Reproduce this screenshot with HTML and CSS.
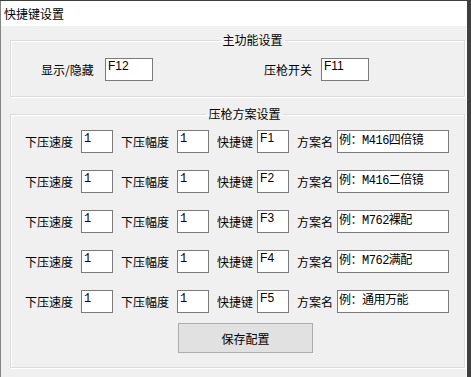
FILE: index.html
```html
<!DOCTYPE html>
<html lang="zh-CN">
<head>
  <meta charset="UTF-8">
  <title>快捷键设置</title>
  <link rel="stylesheet" href="styles.css">
</head>
<body>

<div class="window">
  <div class="titlebar">快捷键设置</div>

  <div class="window-body">
    <fieldset class="group group-main">
      <legend>主功能设置</legend>
      <div class="main-row">
        <label class="lbl-main">显示/隐藏</label>
        <input class="box main-box" value="F12">
        <label class="lbl-main lbl-gun">压枪开关</label>
        <input class="box main-box" value="F11">
      </div>
    </fieldset>

    <fieldset class="group group-scheme">
      <legend>压枪方案设置</legend>

      <div class="scheme-row">
        <label class="lbl">下压速度</label><input class="box num-box" value="1">
        <label class="lbl">下压幅度</label><input class="box num-box" value="1">
        <label class="lbl lbl-short">快捷键</label><input class="box key-box" value="F1">
        <label class="lbl lbl-short">方案名</label><input class="box name-box" value="例：M416四倍镜">
      </div>
      <div class="scheme-row">
        <label class="lbl">下压速度</label><input class="box num-box" value="1">
        <label class="lbl">下压幅度</label><input class="box num-box" value="1">
        <label class="lbl lbl-short">快捷键</label><input class="box key-box" value="F2">
        <label class="lbl lbl-short">方案名</label><input class="box name-box" value="例：M416二倍镜">
      </div>
      <div class="scheme-row">
        <label class="lbl">下压速度</label><input class="box num-box" value="1">
        <label class="lbl">下压幅度</label><input class="box num-box" value="1">
        <label class="lbl lbl-short">快捷键</label><input class="box key-box" value="F3">
        <label class="lbl lbl-short">方案名</label><input class="box name-box" value="例：M762裸配">
      </div>
      <div class="scheme-row">
        <label class="lbl">下压速度</label><input class="box num-box" value="1">
        <label class="lbl">下压幅度</label><input class="box num-box" value="1">
        <label class="lbl lbl-short">快捷键</label><input class="box key-box" value="F4">
        <label class="lbl lbl-short">方案名</label><input class="box name-box" value="例：M762满配">
      </div>
      <div class="scheme-row">
        <label class="lbl">下压速度</label><input class="box num-box" value="1">
        <label class="lbl">下压幅度</label><input class="box num-box" value="1">
        <label class="lbl lbl-short">快捷键</label><input class="box key-box" value="F5">
        <label class="lbl lbl-short">方案名</label><input class="box name-box" value="例：通用万能">
      </div>

      <button class="save-btn">保存配置</button>
    </fieldset>
  </div>
</div>

</body>
</html>
```

FILE: styles.css
```css
* { box-sizing: border-box; }
body {
  margin: 0;
  background: #3f3f3f;
  color: #000;
  font-family: "Noto Sans CJK SC", sans-serif;
  font-size: 12px;
}
.window {
  width: 467px;
  height: 376px;
  margin-top: 1px;
  background: #f0f0f0;
  border-left: 1px solid #858585;
  border-right: 1px solid #fafafa;
  display: flex;
  flex-direction: column;
}
.titlebar {
  height: 25px;
  line-height: 25px;
  padding-left: 3px;
  background: #fff;
}
.window-body {
  flex: 1;
  padding: 6px 1px 0 9px;
}
.group {
  margin: 0;
  min-width: 0;
  border: 1px solid #dcdcdc;
  box-shadow: inset 1px 1px 0 #fff, 1px 1px 0 #fff;
}
.group legend {
  margin: 0 auto;
  padding: 0 2px;
  line-height: 16px;
}
.group-main {
  padding: 10px 0 15px 30px;
}
.group-scheme {
  margin-top: 9px;
  padding: 8px 0 14px 14px;
}
.main-row,
.scheme-row {
  display: flex;
  align-items: center;
  height: 23px;
}
.scheme-row + .scheme-row {
  margin-top: 17px;
}
.lbl-main {
  width: 64px;
}
.lbl-gun {
  width: 57px;
  margin-left: 111px;
}
.lbl {
  margin-right: 8px;
  white-space: nowrap;
}
.lbl-short {
  margin-right: 4px;
}
.box {
  height: 23px;
  margin: 0 8px 0 0;
  padding: 0 2px 8px;
  border: 1px solid #7a7a7a;
  background: #fff;
  color: #000;
  font-size: 12px;
  outline: none;
}
.main-box,
.key-box {
  font-family: "Liberation Sans", Arial, sans-serif;
}
.main-box {
  width: 48px;
  margin-right: 0;
}
.key-box { width: 32px; }
.num-box {
  width: 32px;
  padding-bottom: 6px;
  font-family: "Liberation Mono", "Noto Sans CJK SC", monospace;
}
.name-box {
  width: 112px;
  padding: 0 1px 6px;
  font-family: "Liberation Mono", "Noto Sans CJK SC", monospace;
  letter-spacing: -0.5px;
}
.save-btn {
  display: block;
  width: 135px;
  height: 30px;
  margin: 10px 0 0 153px;
  border: 1px solid #adadad;
  background: #e1e1e1;
  color: #000;
  font-family: "Noto Sans CJK SC", sans-serif;
  font-size: 12px;
}
```
